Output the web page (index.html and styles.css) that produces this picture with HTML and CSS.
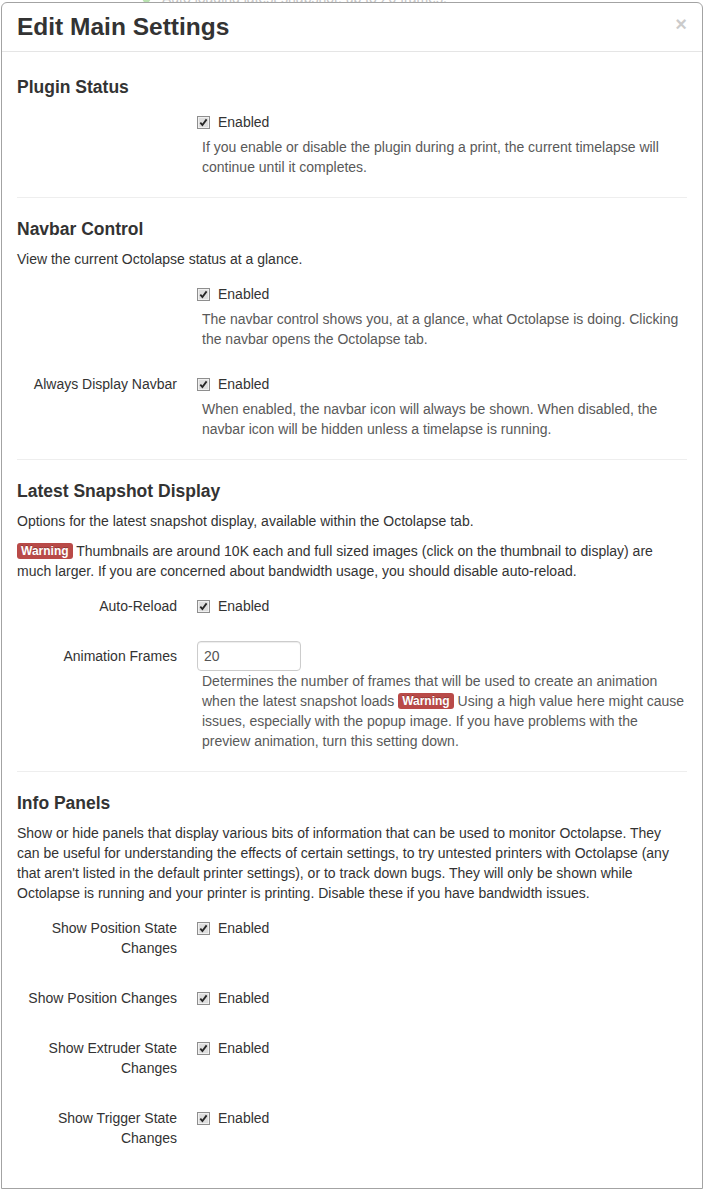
FILE: index.html
```html
<!DOCTYPE html>
<html lang="en">
<head>
<meta charset="utf-8">
<title>Edit Main Settings</title>
<link rel="stylesheet" href="styles.css">
</head>
<body>
<div class="page-behind">
  <svg class="behind-icon" width="9" height="9" viewBox="0 0 9 9"><circle cx="4.5" cy="4.5" r="4" fill="#b9e2b0"/></svg>
  <span>Auto loading latest snapshot: up to 20 frames.</span>
</div>

<div class="modal">
  <div class="modal-header">
    <h3 class="modal-title">Edit Main Settings</h3>
    <span class="close">&times;</span>
  </div>
  <div class="modal-body">
    <h4 class="section-title">Plugin Status</h4>
    <div class="control-group">
      <div class="controls no-label">
        <label class="checkbox"><svg class="cb" width="13" height="13" viewBox="0 0 13 13"><rect x="0.5" y="0.5" width="12" height="12" fill="#f0f0f0" stroke="#8e8e8e"/><rect x="2" y="2" width="9" height="9" fill="#dedede"/><path d="M3.3 6.6 L5.4 9 L9.6 3.4" fill="none" stroke="#262626" stroke-width="1.8"/></svg>Enabled</label>
        <div class="help-block">If you enable or disable the plugin during a print, the current timelapse will continue until it completes.</div>
      </div>
    </div>

    <hr class="divider">

    <h4 class="section-title">Navbar Control</h4>
    <p class="para">View the current Octolapse status at a glance.</p>
    <div class="control-group">
      <div class="controls no-label">
        <label class="checkbox"><svg class="cb" width="13" height="13" viewBox="0 0 13 13"><rect x="0.5" y="0.5" width="12" height="12" fill="#f0f0f0" stroke="#8e8e8e"/><rect x="2" y="2" width="9" height="9" fill="#dedede"/><path d="M3.3 6.6 L5.4 9 L9.6 3.4" fill="none" stroke="#262626" stroke-width="1.8"/></svg>Enabled</label>
        <div class="help-block">The navbar control shows you, at a glance, what Octolapse is doing. Clicking the navbar opens the Octolapse tab.</div>
      </div>
    </div>
    <div class="control-group">
      <div class="control-label">Always Display Navbar</div>
      <div class="controls">
        <label class="checkbox"><svg class="cb" width="13" height="13" viewBox="0 0 13 13"><rect x="0.5" y="0.5" width="12" height="12" fill="#f0f0f0" stroke="#8e8e8e"/><rect x="2" y="2" width="9" height="9" fill="#dedede"/><path d="M3.3 6.6 L5.4 9 L9.6 3.4" fill="none" stroke="#262626" stroke-width="1.8"/></svg>Enabled</label>
        <div class="help-block">When enabled, the navbar icon will always be shown. When disabled, the navbar icon will be hidden unless a timelapse is running.</div>
      </div>
    </div>

    <hr class="divider">

    <h4 class="section-title">Latest Snapshot Display</h4>
    <p class="para">Options for the latest snapshot display, available within the Octolapse tab.</p>
    <p class="para"><span class="label-warning">Warning</span> Thumbnails are around 10K each and full sized images (click on the thumbnail to display) are much larger. If you are concerned about bandwidth usage, you should disable auto-reload.</p>
    <div class="control-group">
      <div class="control-label">Auto-Reload</div>
      <div class="controls">
        <label class="checkbox"><svg class="cb" width="13" height="13" viewBox="0 0 13 13"><rect x="0.5" y="0.5" width="12" height="12" fill="#f0f0f0" stroke="#8e8e8e"/><rect x="2" y="2" width="9" height="9" fill="#dedede"/><path d="M3.3 6.6 L5.4 9 L9.6 3.4" fill="none" stroke="#262626" stroke-width="1.8"/></svg>Enabled</label>
      </div>
    </div>
    <div class="control-group">
      <div class="control-label">Animation Frames</div>
      <div class="controls">
        <input class="text-input" type="text" value="20">
        <div class="help-block">Determines the number of frames that will be used to create an animation when the latest snapshot loads <span class="label-warning">Warning</span> Using a high value here might cause issues, especially with the popup image. If you have problems with the preview animation, turn this setting down.</div>
      </div>
    </div>

    <hr class="divider">

    <h4 class="section-title">Info Panels</h4>
    <p class="para">Show or hide panels that display various bits of information that can be used to monitor Octolapse. They can be useful for understanding the effects of certain settings, to try untested printers with Octolapse (any that aren't listed in the default printer settings), or to track down bugs. They will only be shown while Octolapse is running and your printer is printing. Disable these if you have bandwidth issues.</p>
    <div class="control-group">
      <div class="control-label">Show Position State Changes</div>
      <div class="controls">
        <label class="checkbox"><svg class="cb" width="13" height="13" viewBox="0 0 13 13"><rect x="0.5" y="0.5" width="12" height="12" fill="#f0f0f0" stroke="#8e8e8e"/><rect x="2" y="2" width="9" height="9" fill="#dedede"/><path d="M3.3 6.6 L5.4 9 L9.6 3.4" fill="none" stroke="#262626" stroke-width="1.8"/></svg>Enabled</label>
      </div>
    </div>
    <div class="control-group">
      <div class="control-label">Show Position Changes</div>
      <div class="controls">
        <label class="checkbox"><svg class="cb" width="13" height="13" viewBox="0 0 13 13"><rect x="0.5" y="0.5" width="12" height="12" fill="#f0f0f0" stroke="#8e8e8e"/><rect x="2" y="2" width="9" height="9" fill="#dedede"/><path d="M3.3 6.6 L5.4 9 L9.6 3.4" fill="none" stroke="#262626" stroke-width="1.8"/></svg>Enabled</label>
      </div>
    </div>
    <div class="control-group">
      <div class="control-label">Show Extruder State Changes</div>
      <div class="controls">
        <label class="checkbox"><svg class="cb" width="13" height="13" viewBox="0 0 13 13"><rect x="0.5" y="0.5" width="12" height="12" fill="#f0f0f0" stroke="#8e8e8e"/><rect x="2" y="2" width="9" height="9" fill="#dedede"/><path d="M3.3 6.6 L5.4 9 L9.6 3.4" fill="none" stroke="#262626" stroke-width="1.8"/></svg>Enabled</label>
      </div>
    </div>
    <div class="control-group">
      <div class="control-label">Show Trigger State Changes</div>
      <div class="controls">
        <label class="checkbox"><svg class="cb" width="13" height="13" viewBox="0 0 13 13"><rect x="0.5" y="0.5" width="12" height="12" fill="#f0f0f0" stroke="#8e8e8e"/><rect x="2" y="2" width="9" height="9" fill="#dedede"/><path d="M3.3 6.6 L5.4 9 L9.6 3.4" fill="none" stroke="#262626" stroke-width="1.8"/></svg>Enabled</label>
      </div>
    </div>
  </div>
</div>
</body>
</html>
```
FILE: styles.css
```css
html, body {
  margin: 0;
  padding: 0;
  background: #ffffff;
}

body {
  font-family: "Liberation Sans", Arial, Helvetica, sans-serif;
  font-size: 14px;
  line-height: 20px;
  color: #333333;
}

.page-behind {
  position: absolute;
  top: -12px;
  left: 142px;
  display: flex;
  align-items: center;
  gap: 11px;
  color: #c4c4c4;
  white-space: nowrap;
}

.behind-icon {
  display: block;
}

.modal {
  position: relative;
  width: 702px;
  margin: 2px 0 0 1px;
  box-sizing: border-box;
  background: #ffffff;
  border: 1px solid #a3a3a3;
  border-radius: 6px 6px 0 0;
}

.modal-header {
  display: flex;
  justify-content: space-between;
  align-items: flex-start;
  padding: 9px 15px;
  border-bottom: 1px solid #e5e5e5;
}

.modal-title {
  margin: 0;
  font-size: 24.5px;
  line-height: 30px;
  font-weight: bold;
  color: #333333;
}

.close {
  margin-top: 2px;
  font-size: 20px;
  line-height: 20px;
  font-weight: bold;
  color: #000000;
  opacity: 0.2;
}

.modal-body {
  padding: 15px;
}

.section-title {
  margin: 10px 0;
  font-size: 17.5px;
  line-height: 20px;
  font-weight: bold;
  color: #333333;
}

.para {
  margin: 0 0 10px;
}

.divider {
  margin: 20px 0;
  border: 0;
  border-top: 1px solid #eeeeee;
  border-bottom: 1px solid #ffffff;
}

.control-group {
  display: flex;
  margin-bottom: 20px;
}

.control-label {
  width: 160px;
  flex: none;
  padding: 5px 0;
  text-align: right;
}

.controls {
  flex: 1;
  min-width: 0;
  margin-left: 20px;
}

.controls.no-label {
  margin-left: 180px;
}

.checkbox {
  display: flex;
  align-items: center;
  padding: 5px 0;
  line-height: 20px;
}

.cb {
  display: block;
  flex: none;
  margin-right: 8px;
}

.help-block {
  padding-left: 5px;
  color: #595959;
}

.text-input {
  display: block;
  box-sizing: border-box;
  width: 104px;
  height: 30px;
  margin: 0;
  padding: 4px 6px;
  font-family: "Liberation Sans", Arial, Helvetica, sans-serif;
  font-size: 14px;
  line-height: 20px;
  color: #555555;
  background: #ffffff;
  border: 1px solid #cccccc;
  border-radius: 4px;
  box-shadow: inset 0 1px 1px rgba(0, 0, 0, 0.075);
}

.label-warning {
  display: inline-block;
  padding: 0 4px;
  font-size: 12px;
  line-height: 16px;
  font-weight: bold;
  color: #ffffff;
  background: #b94a48;
  border-radius: 3px;
  text-shadow: 0 -1px 0 rgba(0, 0, 0, 0.25);
  vertical-align: 1px;
}
```
